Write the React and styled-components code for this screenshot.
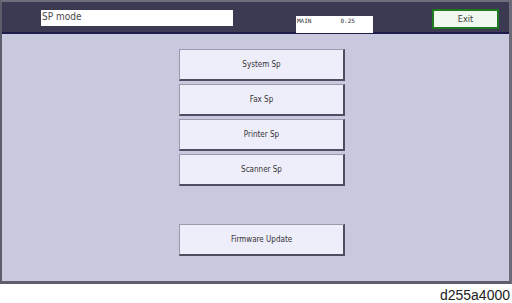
import { createGlobalStyle, styled } from 'styled-components'

const GlobalStyle = createGlobalStyle`
  html, body {
    margin: 0;
    padding: 0;
    background: #ffffff;
  }
  body {
    font-family: "DejaVu Sans", "Liberation Sans", sans-serif;
  }
`

// the whole panel of the copier, with its grey frame
const Screen = styled.div`
  width: 512px;
  box-sizing: border-box;
  border-top: 2px solid #6e6e7c;
  border-left: 2px solid #5c5c6a;
  border-right: 3px solid #6a6a78;
  border-bottom: 3px solid #5e5e6c;
  display: flex;
  flex-direction: column;
`

const TopBar = styled.div`
  height: 30px;
  background: #3b3a52;
  border-bottom: 2px solid #1c1c4a;
  display: flex;
  align-items: flex-start;
`

const TitleBox = styled.div`
  margin: 8px 0 0 39px;
  width: 192px;
  height: 16px;
  background: #ffffff;
  font-size: 10px;
  font-stretch: condensed;
  color: #4a4a4a;
  line-height: 13px;
  padding-left: 1px;
  box-sizing: border-box;
`

const StatusBox = styled.div`
  margin: 14px 0 0 63px;
  width: 77px;
  height: 17px;
  background: #ffffff;
  font-family: "DejaVu Sans Mono", monospace;
  font-size: 6px;
  color: #333;
  line-height: 9px;
  padding-left: 1px;
  box-sizing: border-box;
  display: flex;
  gap: 29px;
`

const ExitButton = styled.button`
  margin: 7px 0 0 59px;
  width: 67px;
  height: 20px;
  background: #f0f8f0;
  border: 2px solid #1f7a22;
  font-family: "DejaVu Sans", sans-serif;
  font-stretch: condensed;
  font-size: 9px;
  color: #3a3a3a;
  padding: 0;
  line-height: 14px;
`

const Content = styled.div`
  height: 247px;
  background: #c8c8de;
  padding: 15px 0 0 177px;
  box-sizing: border-box;
  display: flex;
  flex-direction: column;
  align-items: flex-start;
  gap: 3px;
`

const MenuButton = styled.button`
  width: 166px;
  height: 32px;
  box-sizing: border-box;
  margin-top: ${(p) => (p.$spaced ? '35px' : '0')};
  background: #eeeefa;
  border-top: 1px solid #9a9aae;
  border-left: 1px solid #9a9aae;
  border-right: 2px solid #4e4e62;
  border-bottom: 2px solid #4e4e62;
  font-family: "DejaVu Sans", sans-serif;
  font-stretch: condensed;
  font-size: 8px;
  color: #333;
  padding: 0;
`

const Caption = styled.div`
  width: 510px;
  margin-top: 3px;
  text-align: right;
  font-family: "Liberation Sans", Arial, sans-serif;
  font-size: 14px;
  line-height: 16px;
  color: #222;
`

const items = ['System Sp', 'Fax Sp', 'Printer Sp', 'Scanner Sp']

export default function App() {
  return (
    <>
      <GlobalStyle />
      <Screen>
        <TopBar>
          <TitleBox>SP mode</TitleBox>
          <StatusBox>
            <span>MAIN</span>
            <span>0.25</span>
          </StatusBox>
          <ExitButton>Exit</ExitButton>
        </TopBar>
        <Content>
          {items.map((label) => (
            <MenuButton key={label}>{label}</MenuButton>
          ))}
          <MenuButton $spaced>Firmware Update</MenuButton>
        </Content>
      </Screen>
      <Caption>d255a4000</Caption>
    </>
  )
}
